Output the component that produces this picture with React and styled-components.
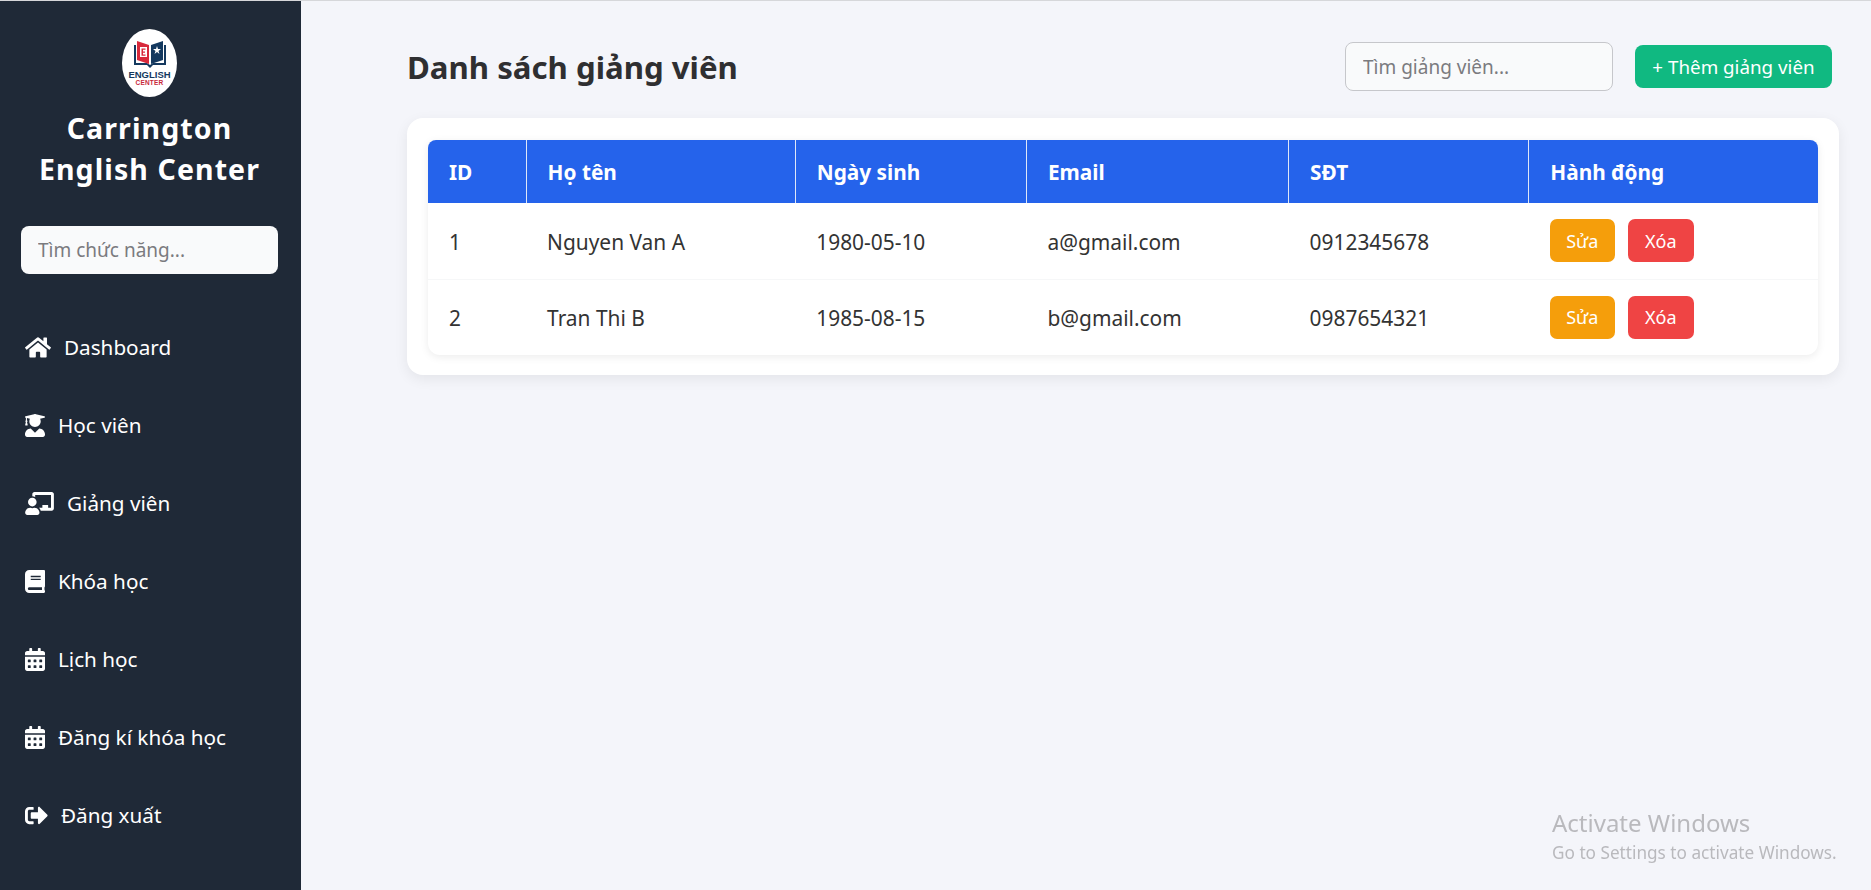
import React from "react";
import styled, { createGlobalStyle } from "styled-components";
import { FaHome, FaUserGraduate, FaChalkboardTeacher, FaBook, FaCalendarAlt, FaSignOutAlt } from "react-icons/fa";

const Global = createGlobalStyle`
  * { box-sizing: border-box; }
  html, body { margin: 0; height: 100%; overflow: hidden; }
  body { font-family: "Noto Sans", "Open Sans", sans-serif; background: #f4f5fa; color: #333; }
  input::placeholder { color: #7b7b7f; opacity: 1; }
`;

const Page = styled.div`
  display: flex;
  height: 890px;
  border-top: 1px solid #d6d7da;
`;

const Sidebar = styled.aside`
  width: 301px;
  flex: none;
  background: #1f2937;
  color: #fff;
  padding: 28px 21px 0;
  display: flex;
  flex-direction: column;
`;

const LogoBadge = styled.div`
  align-self: center;
  width: 55px;
  height: 68px;
  margin-right: 2px;
  border-radius: 50%;
  background: #fff;
  display: flex;
  flex-direction: column;
  align-items: center;
  padding-top: 11px;
  font-weight: 700;
  line-height: 1;
`;

const LogoWord = styled.span`
  font-size: 9.5px;
  color: #14395f;
  margin-top: 1px;
  font-family: "Liberation Sans", sans-serif;
`;

const LogoSub = styled.span`
  font-size: 6.5px;
  color: #c8283a;
  letter-spacing: 0.2px;
  font-family: "Liberation Sans", sans-serif;
`;

const Brand = styled.h1`
  margin: 11px -9px 36px -11px;
  font-size: 28.5px;
  line-height: 41px;
  font-weight: 700;
  text-align: center;
  letter-spacing: 1.1px;
`;

const SideSearch = styled.input`
  width: 257px;
  height: 48px;
  border: none;
  border-radius: 8px;
  background: #f9fafb;
  padding: 0 17px;
  font: inherit;
  font-size: 19px;
  outline: none;
  flex: none;
`;

const Nav = styled.nav`
  margin: 34px 0 0 4px;
  display: flex;
  flex-direction: column;
`;

const NavItem = styled.a`
  height: 78px;
  display: flex;
  align-items: center;
  gap: 13px;
  color: #fff;
  font-size: 20.7px;
  svg { width: ${(p) => p.$iconWidth}px; height: 23px; flex: none; }
`;

const Main = styled.main`
  flex: 1;
  min-width: 0;
  padding: 0 32px 0 106px;
`;

const Header = styled.header`
  height: 117px;
  padding: 41px 7px 0 0;
  display: flex;
  align-items: flex-start;
  gap: 22px;
`;

const Title = styled.h2`
  margin: 0 auto 0 0;
  font-size: 31.2px;
  line-height: 50px;
  font-weight: 700;
  color: #2f2f31;
`;

const TeacherSearch = styled.input`
  width: 268px;
  height: 49px;
  border: 1px solid #c6c7cb;
  border-radius: 8px;
  background: #f9fafb;
  padding: 0 17px;
  font: inherit;
  font-size: 19px;
  outline: none;
`;

const AddButton = styled.button`
  width: 197px;
  height: 43px;
  margin-top: 3px;
  border: none;
  border-radius: 8px;
  background: #10b981;
  color: #fff;
  font: inherit;
  font-size: 18.8px;
  padding: 0;
`;

const Card = styled.section`
  background: #fff;
  border-radius: 16px;
  padding: 22px 21px 21px;
  height: 257px;
  box-shadow: 0 4px 14px rgba(0, 0, 0, 0.07);
`;

const TableShell = styled.div`
  border-radius: 8px 8px 12px 12px;
  overflow: hidden;
  box-shadow: 0 2px 8px rgba(0, 0, 0, 0.08);
  background: #fff;
`;

const Table = styled.table`
  width: 100%;
  table-layout: fixed;
  border-collapse: collapse;
`;

const Th = styled.th`
  width: ${(p) => p.$w}px;
  height: 63px;
  background: #2563eb;
  color: #fff;
  text-align: left;
  padding: 0 21px;
  font-size: 20.8px;
  font-weight: 700;
  border-right: 1px solid #dfe7f8;
  &:last-child { border-right: none; }
`;

const Row = styled.tr`
  & + & td { border-top: 1px solid #f6f7f8; }
`;

const Td = styled.td`
  height: 76px;
  padding: 2px 21px 0;
  font-size: 20.9px;
  color: #333;
`;

const Actions = styled.div`
  display: flex;
  gap: 13px;
  margin-top: -2px;
`;

const ActionButton = styled.button`
  width: ${(p) => p.$w}px;
  height: 43px;
  border: none;
  border-radius: 7px;
  padding: 0;
  color: #fff;
  font: inherit;
  font-size: 18px;
  background: ${(p) => p.$bg};
`;

const Watermark = styled.div`
  position: fixed;
  left: 1552px;
  top: 807px;
  color: #b9b9bd;
  font-size: 17.2px;
  line-height: 22px;
  pointer-events: none;
`;

const WatermarkTitle = styled.div`
  font-size: 24px;
  line-height: 32px;
  margin-bottom: 3px;
`;

const navItems = [
  [FaHome, "Dashboard", 26],
  [FaUserGraduate, "Học viên", 20],
  [FaChalkboardTeacher, "Giảng viên", 29],
  [FaBook, "Khóa học", 20],
  [FaCalendarAlt, "Lịch học", 20],
  [FaCalendarAlt, "Đăng kí khóa học", 20],
  [FaSignOutAlt, "Đăng xuất", 23],
];

const columns = [["ID", 98], ["Họ tên", 269], ["Ngày sinh", 231], ["Email", 262], ["SĐT", 240], ["Hành động", 289]];

const teachers = [
  ["1", "Nguyen Van A", "1980-05-10", "a@gmail.com", "0912345678"],
  ["2", "Tran Thi B", "1985-08-15", "b@gmail.com", "0987654321"],
];

const BookIcon = () => (
  <svg width="34" height="29" viewBox="0 0 34 29">
    <path d="M1 5v20h13l3 3 3-3h13V5h-2v18H20l-3 2-3-2H3V5z" fill="#14395f" />
    <path d="M4 1l12 4v19L4 20z" fill="#d8293b" />
    <path d="M30 1L18 5v19l12-4z" fill="#14395f" />
    <rect x="7" y="7" width="7" height="10" fill="#fff" />
    <path d="M8.500 8.500h4v1.300h-2.500v1.700h2v1.200h-2v1.800h2.500v1.300h-4z" fill="#d8293b" />
    <path d="M24 6l1 3h3l-2.500 2 1 3-2.500-2-2.500 2 1-3L20 9h3z" fill="#fff" />
  </svg>
);

export default function App() {
  return (
    <>
      <Global />
      <Page>
        <Sidebar>
          <LogoBadge>
            <BookIcon />
            <LogoWord>ENGLISH</LogoWord>
            <LogoSub>CENTER</LogoSub>
          </LogoBadge>
          <Brand>Carrington<br />English Center</Brand>
          <SideSearch placeholder="Tìm chức năng..." />
          <Nav>
            {navItems.map(([Icon, label, iconWidth]) => (
              <NavItem key={label} $iconWidth={iconWidth}><Icon />{label}</NavItem>
            ))}
          </Nav>
        </Sidebar>
        <Main>
          <Header>
            <Title>Danh sách giảng viên</Title>
            <TeacherSearch placeholder="Tìm giảng viên..." />
            <AddButton>+ Thêm giảng viên</AddButton>
          </Header>
          <Card>
            <TableShell>
              <Table>
                <thead>
                  <tr>{columns.map(([c, w]) => <Th key={c} $w={w}>{c}</Th>)}</tr>
                </thead>
                <tbody>
                  {teachers.map((t) => (
                    <Row key={t[0]}>
                      {t.map((v, i) => <Td key={i}>{v}</Td>)}
                      <Td>
                        <Actions>
                          <ActionButton $w={65} $bg="#f59e0b">Sửa</ActionButton>
                          <ActionButton $w={66} $bg="#ef4444">Xóa</ActionButton>
                        </Actions>
                      </Td>
                    </Row>
                  ))}
                </tbody>
              </Table>
            </TableShell>
          </Card>
        </Main>
      </Page>
      <Watermark>
        <WatermarkTitle>Activate Windows</WatermarkTitle>
        Go to Settings to activate Windows.
      </Watermark>
    </>
  );
}
